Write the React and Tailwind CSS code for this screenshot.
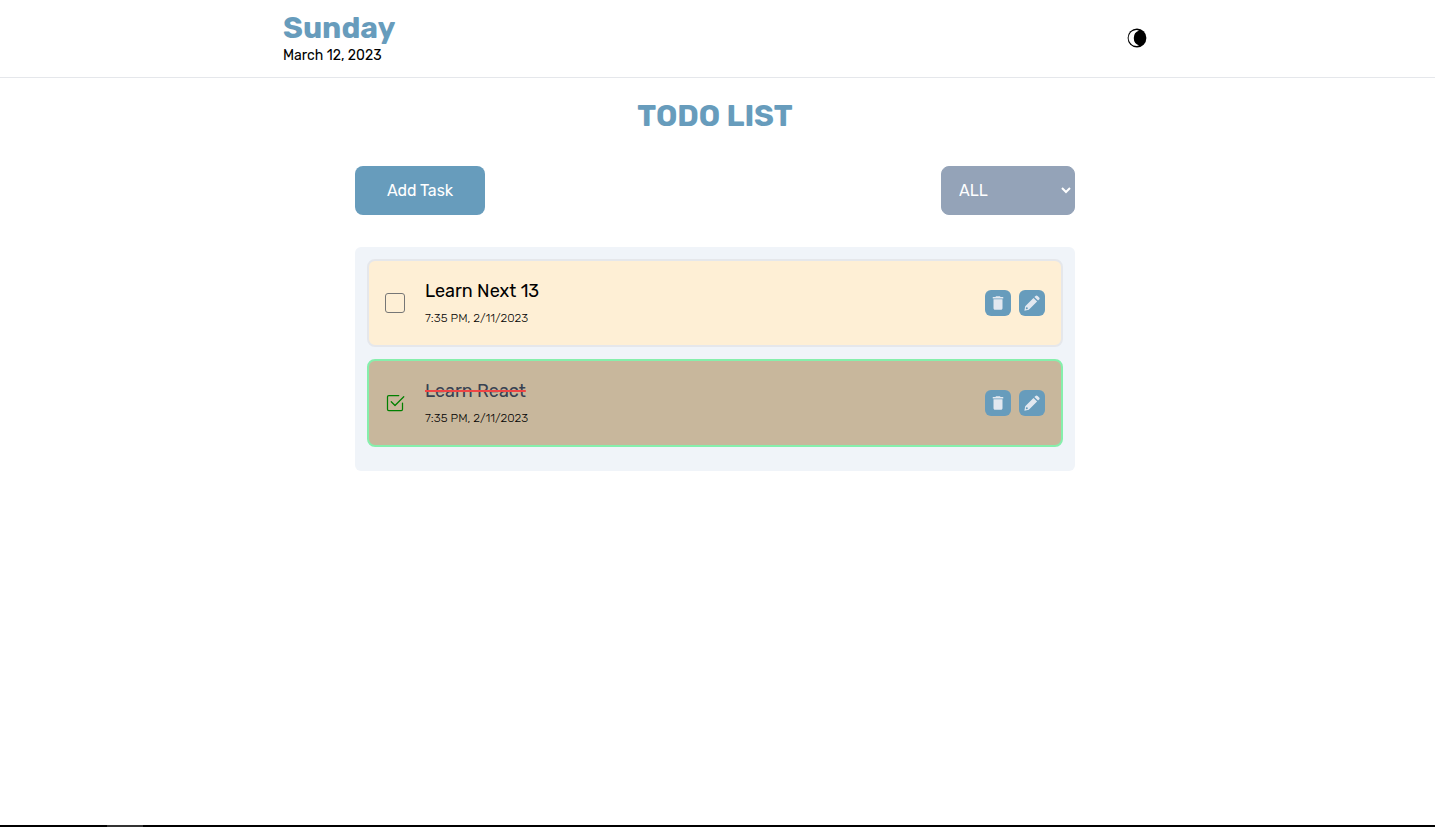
import { useState } from "react";
import { BsCheck2Square } from "react-icons/bs";
import { MdDelete } from "react-icons/md";

const TASKS = [
  { id: 1, title: "Learn Next 13", time: "7:35 PM, 2/11/2023", done: false },
  { id: 2, title: "Learn React", time: "7:35 PM, 2/11/2023", done: true },
];

function MoonIcon() {
  return (
    <svg viewBox="0 0 20 20" className="size-5" aria-hidden="true">
      <circle cx="10" cy="10" r="9.4" fill="#000" />
      <path d="M12 2.5A7.9 7.9 0 1 0 12 17.5A8 8 0 0 1 12 2.5Z" fill="#fff" />
    </svg>
  );
}

function PencilIcon() {
  return (
    <svg viewBox="0 0 16 16" className="size-4" fill="currentColor" aria-hidden="true">
      <path
        fillRule="evenodd"
        d="M9.5 2.9 13.1 6.5 4.8 14.8.4 15.7 1.2 11.2ZM2.8 12.2a1 1 0 1 0 0 2a1 1 0 1 0 0-2Z"
      />
      <path d="M10.4 2 11.5.9a1.5 1.5 0 0 1 2.1 0L15.1 2.4a1.5 1.5 0 0 1 0 2.1L14 5.6Z" />
    </svg>
  );
}

function Task({ task, onToggle }) {
  return (
    <li
      className={
        task.done
          ? "flex items-center rounded-lg border-2 border-[#86efac] bg-[#c8b79c] p-4"
          : "flex items-center rounded-lg border-2 border-[#e5e7eb] bg-[#feefd5] p-4"
      }
    >
      <span className="grid size-5 shrink-0 place-items-center">
        <input
          id={`task-${task.id}`}
          type="checkbox"
          checked={task.done}
          onChange={onToggle}
          className="col-start-1 row-start-1 size-5 appearance-none rounded-[3px] border border-[#767676] checked:border-transparent"
        />
        {task.done && (
          <BsCheck2Square className="pointer-events-none col-start-1 row-start-1 size-5 text-[#008000]" />
        )}
      </span>
      <div className="ml-5 flex-1">
        <label
          htmlFor={`task-${task.id}`}
          className={
            task.done
              ? "block text-lg leading-7 text-[#374151] line-through decoration-[#ef4444] decoration-2"
              : "block text-lg leading-7 text-black"
          }
        >
          {task.title}
        </label>
        <p className="pt-0.5 text-xs leading-[22px] font-light text-black">{task.time}</p>
      </div>
      <div className="flex gap-2">
        <button
          type="button"
          aria-label="Delete"
          className="grid size-[26px] place-items-center rounded-md bg-[#679cbc] text-[#e2e8f0]"
        >
          <MdDelete className="size-[18px]" />
        </button>
        <button
          type="button"
          aria-label="Edit"
          className="grid size-[26px] place-items-center rounded-md bg-[#679cbc] text-[#e2e8f0]"
        >
          <PencilIcon />
        </button>
      </div>
    </li>
  );
}

export default function App() {
  const [tasks, setTasks] = useState(TASKS);
  const toggle = (id) =>
    setTasks(tasks.map((t) => (t.id === id ? { ...t, done: !t.done } : t)));

  return (
    <div className="flex min-h-screen flex-col bg-white font-['Rubik','Roboto',sans-serif] text-black">
      <header className="border-b border-[#e5e7eb] pr-[5px]">
        <div className="mx-auto flex w-full max-w-[864px] items-center justify-between pt-2 pb-[13px]">
          <div>
            <h1 className="text-3xl leading-10 font-bold text-[#679cbc]">Sunday</h1>
            <p className="text-sm leading-4">March 12, 2023</p>
          </div>
          <button type="button" aria-label="Toggle theme" className="pt-1">
            <MoonIcon />
          </button>
        </div>
      </header>
      <main className="flex-1 pr-[5px]">
        <div className="mx-auto max-w-[720px]">
          <h2 className="pt-5 text-center text-3xl leading-9 font-bold text-[#679cbc]">TODO LIST</h2>
          <div className="mt-8 flex justify-between">
            <button
              type="button"
              className="h-[49px] w-[130px] rounded-lg bg-[#679cbc] text-base text-white"
            >
              Add Task
            </button>
            <select
              aria-label="Filter tasks"
              className="h-[49px] w-[134px] rounded-lg border border-[#94a3b8] bg-[#94a3b8] px-[13px] text-base text-white"
            >
              <option>ALL</option>
              <option>Completed</option>
              <option>Incomplete</option>
            </select>
          </div>
          <ul className="mt-8 flex flex-col gap-3 rounded-md bg-[#f0f4f9] px-3 pt-3 pb-6">
            {tasks.map((t) => (
              <Task key={t.id} task={t} onToggle={() => toggle(t.id)} />
            ))}
          </ul>
        </div>
      </main>
      <footer className="h-0.5 bg-black pl-[107px]">
        <div className="h-full w-9 bg-[#333]" />
      </footer>
    </div>
  );
}
